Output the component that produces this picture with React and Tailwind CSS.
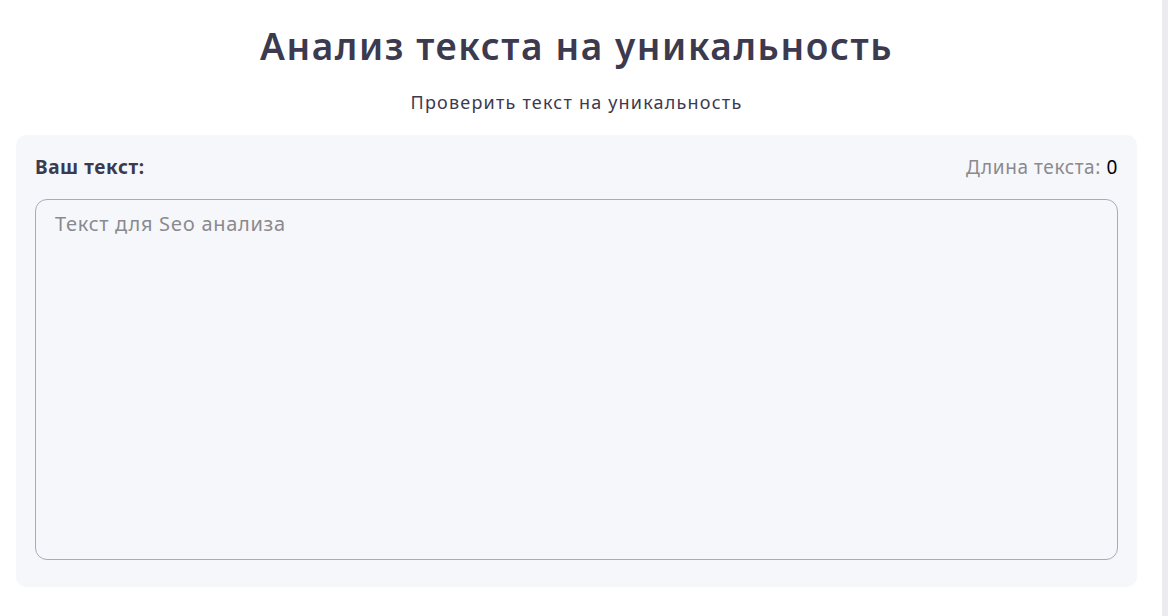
import { useState } from 'react';

export default function App() {
  const [text, setText] = useState('');

  return (
    <div className="flex h-[616px] w-full bg-white font-['Noto_Sans',sans-serif] text-[#3c3a4e]">
      <div className="flex-1 pl-4 pr-[25px]">
        <h1 className="pt-[22px] text-center text-[37px] font-semibold leading-[48px] tracking-[1.6px]">
          Анализ текста на уникальность
        </h1>
        <p className="mt-[20px] text-center text-[18px] leading-[24px] tracking-[1.2px]">
          Проверить текст на уникальность
        </p>
        <div className="mt-[21px] rounded-[10px] bg-[#f6f7fb] px-[19px] pb-[27px] pt-[20px]">
          <div className="flex items-center justify-between">
            <span className="text-[19px] font-bold leading-[24px] tracking-[0.6px]">Ваш текст:</span>
            <span className="text-[19px] leading-[24px] tracking-[0.6px] text-[#8a8a8e]">
              Длина текста: <span className="text-black">{text.length}</span>
            </span>
          </div>
          <textarea
            value={text}
            onChange={(e) => setText(e.target.value)}
            placeholder="Текст для Seo анализа"
            className="mt-[20px] block h-[361px] w-full resize-none rounded-[12px] border border-[#a9a9b8] bg-transparent px-[19px] py-[10px] text-[20px] leading-[28px] tracking-[0.7px] outline-none placeholder:text-[#8a8a8e]"
          />
        </div>
      </div>
      <div className="w-[6px] bg-[#ebebf0]" />
    </div>
  );
}
